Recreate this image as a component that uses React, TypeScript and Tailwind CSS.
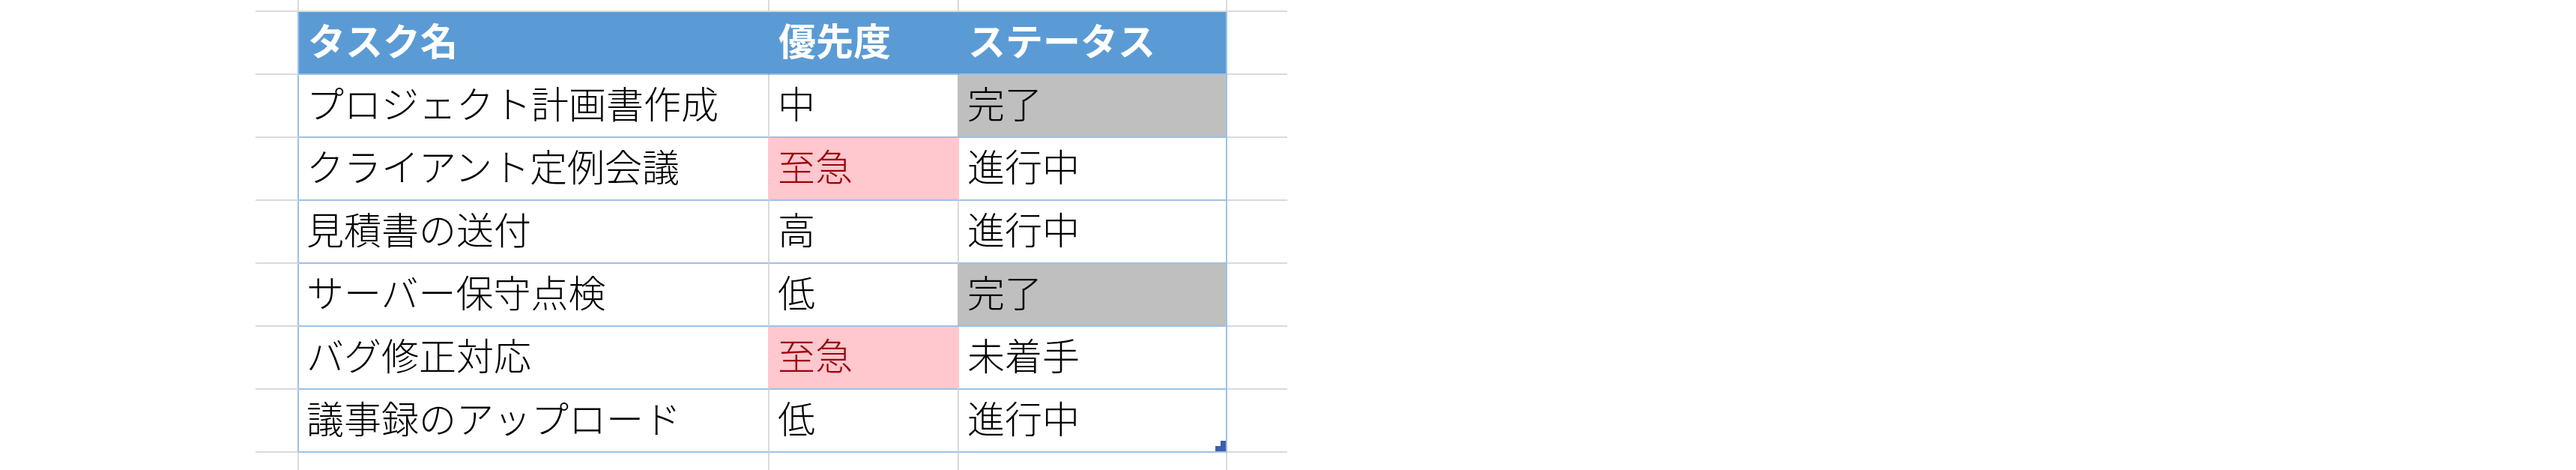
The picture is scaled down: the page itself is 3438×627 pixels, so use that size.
const rows = [
  { task: 'プロジェクト計画書作成', pri: '中', status: '完了' },
  { task: 'クライアント定例会議', pri: '至急', status: '進行中' },
  { task: '見積書の送付', pri: '高', status: '進行中' },
  { task: 'サーバー保守点検', pri: '低', status: '完了' },
  { task: 'バグ修正対応', pri: '至急', status: '未着手' },
  { task: '議事録のアップロード', pri: '低', status: '進行中' },
]

// gridline / table colours
const GRID = 'border-[#dadada]'

function GridRow({ h, last }: { h: string; last?: boolean }) {
  const b = last ? '' : 'border-b-2'
  return (
    <div className={`flex ${h}`}>
      <div className={`w-[58px] border-r-2 ${b} ${GRID}`} />
      <div className={`w-[628px] border-r-2 ${b} ${GRID}`} />
      <div className={`w-[253px] border-r-2 ${b} ${GRID}`} />
      <div className={`w-[358px] border-r-2 ${b} ${GRID}`} />
      <div className={`w-[80px] ${b} ${GRID}`} />
    </div>
  )
}

export default function App() {
  return (
    <div className="h-[627px] w-full overflow-hidden bg-white pl-[341px] font-['Liberation_Sans','Noto_Sans_CJK_JP',sans-serif] text-[50px] leading-none font-light text-black">
      <div className="flex h-full flex-col">
        <GridRow h="h-[16px]" />

        {/* header */}
        <div className="flex h-[84px]">
          <div className="w-[58px] border-r-2 border-b-2 border-r-[#9bc2e6] border-b-[#dadada]" />
          <div className="flex w-[628px] items-center border-r-2 border-b-2 border-r-[#5b9bd5] border-b-[#9bc2e6] bg-[#5b9bd5] pl-[12px] font-bold text-white">
            タスク名
          </div>
          <div className="flex w-[253px] items-center border-r-2 border-b-2 border-r-[#5b9bd5] border-b-[#9bc2e6] bg-[#5b9bd5] pl-[12px] font-bold text-white">
            優先度
          </div>
          <div className="flex w-[358px] items-center border-r-2 border-b-2 border-r-[#9bc2e6] border-b-[#9bc2e6] bg-[#5b9bd5] pl-[12px] font-bold text-white">
            ステータス
          </div>
          <div className="w-[80px] border-b-2 border-[#dadada]" />
        </div>

        {rows.map((r, i) => {
          const urgent = r.pri === '至急'
          const done = r.status === '完了'
          const isLast = i === rows.length - 1
          const taskRight = urgent ? 'border-r-[#ffc7ce]' : 'border-r-[#dadada]'
          const priRight = urgent ? 'border-r-[#ffc7ce]' : done ? 'border-r-[#bfbfbf]' : 'border-r-[#dadada]'
          return (
            <div key={i} className="flex h-[84px]">
              <div className="w-[58px] border-r-2 border-b-2 border-r-[#9bc2e6] border-b-[#dadada]" />
              <div className={`flex w-[628px] items-center border-r-2 border-b-2 border-b-[#9bc2e6] ${taskRight} pl-[10px]`}>
                {r.task}
              </div>
              <div
                className={`flex w-[253px] items-center border-r-2 border-b-2 border-b-[#9bc2e6] ${priRight} pl-[11px] ${
                  urgent ? 'bg-[#ffc7ce] text-[#9c0006]' : ''
                }`}
              >
                {r.pri}
              </div>
              <div
                className={`relative flex w-[358px] items-center border-r-2 border-b-2 border-[#9bc2e6] pl-[11px] ${
                  done ? 'bg-[#bfbfbf]' : ''
                }`}
              >
                {r.status}
                {isLast && (
                  <svg className="absolute right-0 bottom-0" width="14" height="14" viewBox="0 0 14 14">
                    <polygon points="0,14 14,14 14,0 7,0 7,7 0,7" fill="#3f5cae" />
                  </svg>
                )}
              </div>
              <div className="w-[80px] border-b-2 border-[#dadada]" />
            </div>
          )
        })}

        <GridRow h="flex-1" last />
      </div>
    </div>
  )
}
